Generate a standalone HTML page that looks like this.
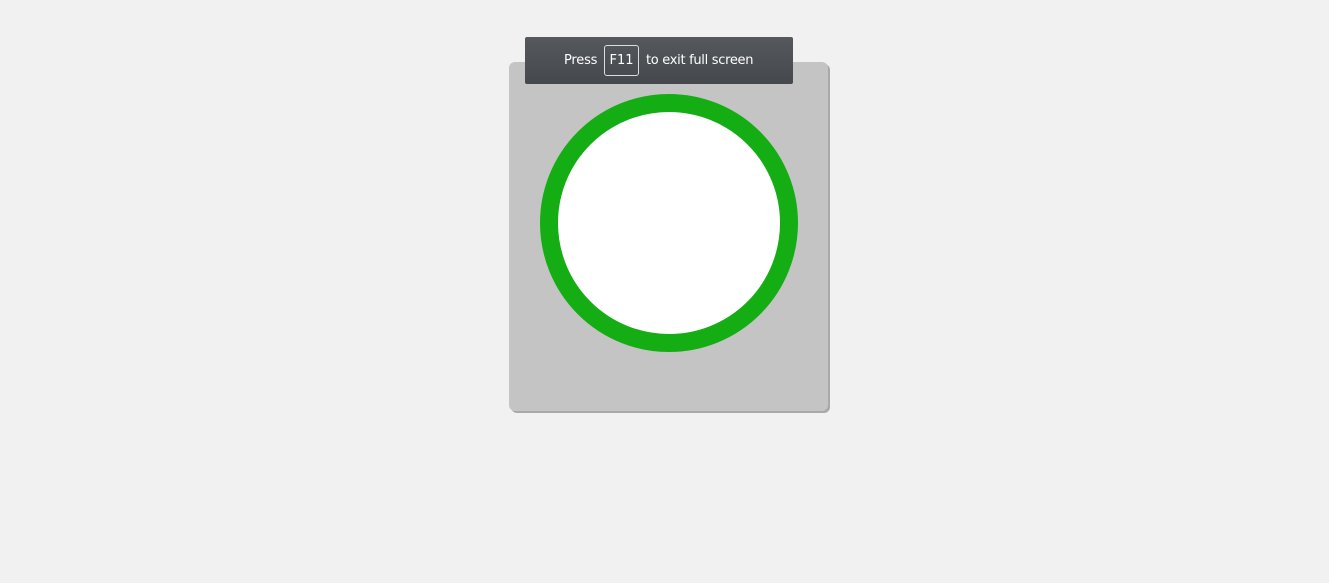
<!DOCTYPE html>
<html><head><style>
body{margin:0;width:1329px;height:583px;background:#f1f1f1;position:relative;overflow:hidden;font-family:"DejaVu Sans","Liberation Sans",sans-serif}
.card{position:absolute;left:509px;top:62px;width:319px;height:349px;background:#c4c4c4;border-radius:6px;box-shadow:2px 2px 0 #a9a9a9}
.ring{position:absolute;left:540px;top:94px;width:222px;height:222px;border:18px solid #14ae14;border-radius:50%;background:#fff}
.toast{position:absolute;left:525px;top:37px;width:268px;height:47px;background:linear-gradient(#55585d,#45484c);border-radius:2px;color:#fff;font-size:13px}
.t1{position:absolute;left:39px;top:16px;letter-spacing:-0.2px}
.key{position:absolute;left:79px;top:8px;width:33px;height:29px;border:1px solid #ddd;border-radius:3px;text-align:center;line-height:30px}
.t2{position:absolute;left:121px;top:16px;letter-spacing:-0.3px}
</style></head><body>
<div class="card"></div>
<div class="ring"></div>
<div class="toast"><span class="t1">Press</span><span class="key">F11</span><span class="t2">to exit full screen</span></div>
</body></html>
